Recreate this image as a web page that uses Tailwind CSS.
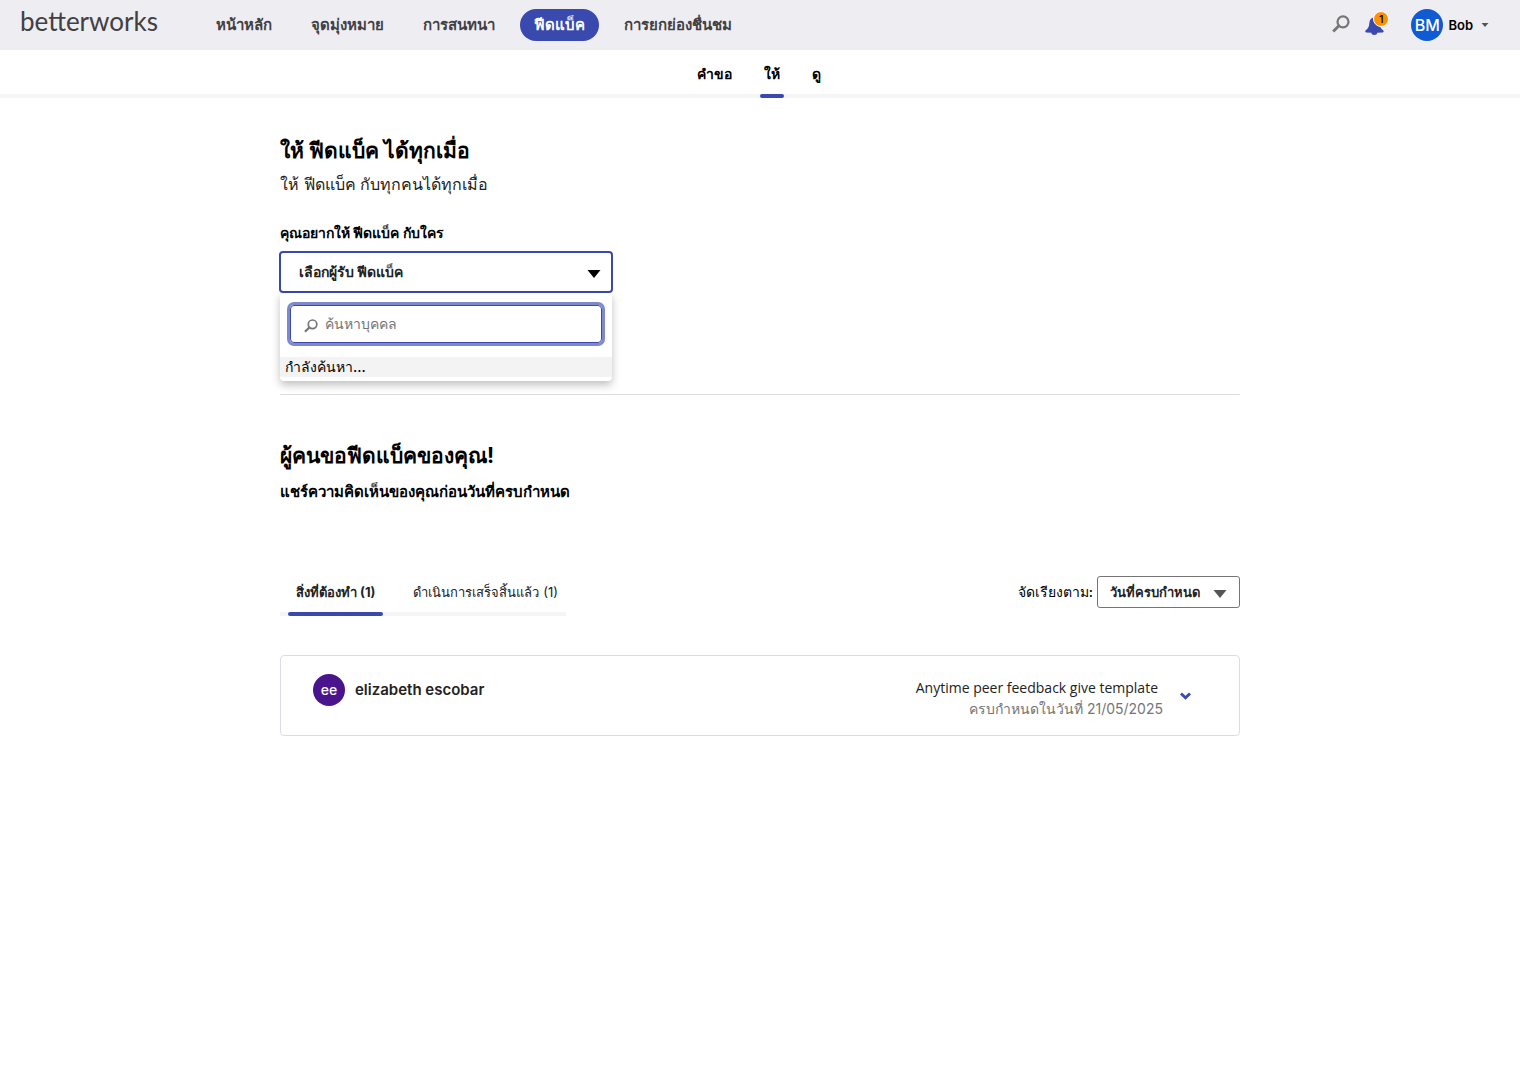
<!DOCTYPE html>
<html lang="th">
<head>
<meta charset="utf-8">
<meta name="viewport" content="width=device-width, initial-scale=1">
<title>Betterworks</title>
<script src="https://cdn.jsdelivr.net/npm/@tailwindcss/browser@4"></script>
</head>
<body class="min-h-screen bg-white font-['Inter','Noto_Sans',sans-serif] text-sm text-black">
<header class="flex h-[50px] items-center bg-[#eeedf2] pr-[31px] pl-5">
  <a href="#" class="w-[182px] shrink-0 pb-2 font-['Lato','Open_Sans',sans-serif] text-[26px] leading-8 text-[#414042]">betterworks</a>
  <nav class="flex items-center gap-[11px] pb-px text-[15px] font-bold whitespace-nowrap text-[#414042]">
    <a href="#" class="rounded-full px-[14px] leading-8">หน้าหลัก</a>
    <a href="#" class="rounded-full px-[14px] leading-8">จุดมุ่งหมาย</a>
    <a href="#" class="rounded-full px-[14px] leading-8">การสนทนา</a>
    <a href="#" class="rounded-full bg-[#3a49ad] px-[14px] leading-8 text-white" aria-current="page">ฟีดแบ็ค</a>
    <a href="#" class="rounded-full px-[14px] leading-8">การยกย่องชื่นชม</a>
  </nav>
  <div class="ml-auto flex items-center">
    <button type="button" aria-label="ค้นหา" class="mr-[15px] pb-[2px]">
      <svg class="size-[18px]" viewBox="0 0 18 18" fill="none" stroke="#757575" stroke-width="2.200"><circle cx="11" cy="6.800" r="5.500"/><path d="M7.200 10.500 1.200 16.500" stroke-width="2.800"/></svg>
    </button>
    <button type="button" aria-label="การแจ้งเตือน" class="relative flex h-8 w-6 items-start pt-2 mr-[22px]">
      <svg class="h-[18px] w-[19px]" viewBox="0 0 19 18" fill="#3a49ad"><path d="M8.500.5C5.600 1 4.600 3 4.300 6.500 4.100 9.800 3 11.600.8 13.200c-.9.700-.6 2.100.4 2.200l5.100.4c.3 1.400 1.400 2.200 3 2.200s2.700-.8 3-2.200l5.400-.4c1.100-.1 1.300-1.500.4-2.200-2.300-1.600-3.200-3.400-3.400-6.700L13 1z"/></svg>
      <span class="absolute top-[2px] right-0 size-4 rounded-full border border-white bg-[#ff9100] text-center text-[11px] leading-[14px] font-medium text-black">1</span>
    </button>
    <button type="button" class="flex items-center">
      <span class="mr-[5px] size-8 rounded-full bg-[#0f5bd3] text-center text-base leading-8 font-medium text-white">BM</span>
      <span class="text-[13px] font-semibold">Bob</span>
      <svg class="ml-2 h-1 w-2" viewBox="0 0 8 4" fill="#555"><path d="M.5 0h7L4 4z"/></svg>
    </button>
  </div>
</header>
<nav class="flex h-12 justify-center border-b-4 border-[#f5f5f6] pr-[2px] font-semibold">
  <a href="#" class="mx-1 h-12 px-3 leading-[48px]">คำขอ</a>
  <a href="#" class="relative mx-3 h-12 px-1 leading-[48px] font-bold" aria-current="page">ให้<span class="absolute inset-x-0 bottom-0 h-1 rounded-full bg-[#3a49ad]"></span></a>
  <a href="#" class="mx-1 h-12 px-3 leading-[48px]">ดู</a>
</nav>
<main class="mx-auto max-w-[960px] pt-8">
  <section class="h-[265px] border-b border-[#dcdce4]">
    <h1 class="text-[21px] leading-[42px] font-bold">ให้ ฟีดแบ็ค ได้ทุกเมื่อ</h1>
    <p class="text-base leading-6 text-[#222]">ให้ ฟีดแบ็ค กับทุกคนได้ทุกเมื่อ</p>
    <p id="who" class="mt-[26px] leading-[22px] font-bold">คุณอยากให้ ฟีดแบ็ค กับใคร</p>
    <div class="relative -ml-px w-[334px] pt-[7px]">
      <button type="button" aria-labelledby="who" aria-expanded="true" class="flex h-[42px] w-full items-center justify-between rounded border-2 border-[#3a49ad] px-[18px] pr-[10px] font-bold text-[#222]">
        <span>เลือกผู้รับ ฟีดแบ็ค</span>
        <svg class="mt-1 h-2 w-[14px]" viewBox="0 0 14 8"><path d="M.5 0h13L7 8z"/></svg>
      </button>
      <div class="absolute top-[49px] left-px w-[332px] rounded-b bg-white pb-1 shadow-[0_4px_8px_rgba(0,0,0,0.25)]">
        <div class="p-[10px] pt-3 pb-[14px]">
          <label class="flex h-[38px] items-center gap-[7px] rounded-sm border border-[#3a49ad] px-[13px] ring-3 ring-[#7d88cd]">
            <svg class="mt-1 size-[14px]" viewBox="0 0 18 18" fill="none" stroke="#757575" stroke-width="2.200"><circle cx="11" cy="6.800" r="5.500"/><path d="M7.200 10.500 1.200 16.500" stroke-width="2.800"/></svg>
            <input type="text" aria-label="ค้นหาบุคคล" placeholder="ค้นหาบุคคล" class="min-w-0 flex-1 outline-none placeholder:text-[#757575]">
          </label>
        </div>
        <p class="bg-[#f3f3f3] px-[5px] leading-5 font-medium">กำลังค้นหา...</p>
      </div>
    </div>
  </section>
  <section class="pt-10">
    <h2 class="text-[21px] leading-[42px] font-bold">ผู้คนขอฟีดแบ็คของคุณ!</h2>
    <p class="text-[15px] leading-[30px] font-bold">แชร์ความคิดเห็นของคุณก่อนวันที่ครบกำหนด</p>
    <div class="mt-[69px] flex items-start justify-between">
      <div role="tablist" class="flex h-10 gap-[14px] border-b-4 border-[#f5f5f8] pl-2 text-[13px] whitespace-nowrap text-[#222]">
        <button type="button" role="tab" aria-selected="true" class="relative h-10 px-2 pb-2 font-bold">สิ่งที่ต้องทำ (1)<span class="absolute inset-x-0 bottom-0 h-1 rounded-full bg-[#3a49ad]"></span></button>
        <button type="button" role="tab" aria-selected="false" class="h-10 pr-2 pb-2 pl-4">ดำเนินการเสร็จสิ้นแล้ว (1)</button>
      </div>
      <div class="relative flex items-center gap-1">
        <label for="sort" class="font-medium">จัดเรียงตาม:</label>
        <select id="sort" class="h-8 w-[143px] appearance-none rounded-[3px] border border-[#757575] px-3 text-[13px] font-bold text-[#222]"><option>วันที่ครบกำหนด</option></select>
        <svg class="pointer-events-none absolute right-[13px] mt-1 h-2 w-[14px]" viewBox="0 0 14 8" fill="#555"><path d="M.5 0h13L7 8z"/></svg>
      </div>
    </div>
    <article class="mt-[39px] flex h-[81px] items-start rounded border border-[#dcdce4] px-8 pt-[18px] text-[#222]">
      <span class="mr-[10px] size-8 rounded-full bg-[#4a148c] text-center leading-8 font-medium text-white">ee</span>
      <h3 class="text-[15px] leading-8 font-semibold">elizabeth escobar</h3>
      <div class="mt-[3px] ml-auto text-right leading-[21px]">
        <p class="pr-[5px] font-['Open_Sans',sans-serif]">Anytime peer feedback give template</p>
        <p class="text-[#757575]">ครบกำหนดในวันที่ 21/05/2025</p>
      </div>
      <button type="button" aria-label="ขยาย" class="mt-[18px] mr-4 ml-[17px]">
        <svg class="h-2 w-[11px]" viewBox="0 0 11 8" fill="none" stroke="#3a49ad" stroke-width="2.800"><path d="m1 1.500 4.500 4.300L10 1.500"/></svg>
      </button>
    </article>
  </section>
</main>
</body>
</html>
